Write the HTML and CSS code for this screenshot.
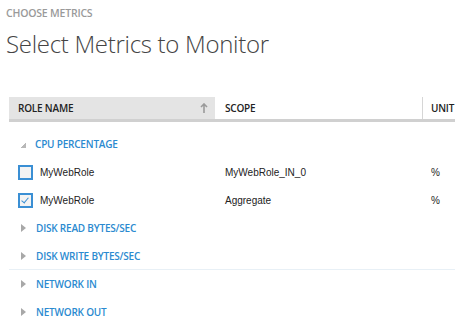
FILE: index.html
```html
<!DOCTYPE html>
<html lang="en">
<head>
    <meta charset="UTF-8">
    <title>Choose Metrics</title>
    <link rel="stylesheet" href="styles.css">
</head>
<body>
    <div class="page">
        <div class="crumb">CHOOSE METRICS</div>
        <h1>Select Metrics to Monitor</h1>

        <div class="grid">
            <div class="head">
                <div class="col role">ROLE NAME
                    <svg class="sort" width="8" height="10" viewBox="0 0 8 10">
                        <path d="M4 1 L4 10 M1 4 L4 1 L7 4" fill="none" stroke="#9a9a9a" stroke-width="1.6"/>
                    </svg>
                </div>
                <div class="col scope">SCOPE</div>
                <div class="col unit">UNIT</div>
            </div>

            <div class="group open"><span class="arrow down"></span>CPU PERCENTAGE</div>
            <div class="row">
                <div class="col role"><span class="check"></span>MyWebRole</div>
                <div class="col scope">MyWebRole_IN_0</div>
                <div class="col unit">%</div>
            </div>
            <div class="row">
                <div class="col role"><span class="check on"></span>MyWebRole</div>
                <div class="col scope">Aggregate</div>
                <div class="col unit">%</div>
            </div>

            <div class="group"><span class="arrow"></span>DISK READ BYTES/SEC</div>
            <div class="group line"><span class="arrow"></span>DISK WRITE BYTES/SEC</div>
            <div class="group"><span class="arrow"></span>NETWORK IN</div>
            <div class="group"><span class="arrow"></span>NETWORK OUT</div>
        </div>
    </div>
</body>
</html>
```

FILE: styles.css
```css
/* Base */
body {
    margin: 0;
    background: #ffffff;
    font-family: "Open Sans", "Segoe UI", sans-serif;
    color: #333333;
    overflow: hidden;
}

.page {
    padding: 6px 0 0 6px;
}

.crumb {
    font-size: 10.5px;
    font-weight: 600;
    color: #9a9a9a;
    letter-spacing: -0.2px;
    line-height: 14px;
}

h1 {
    margin: 9px 0 0 0;
    font-size: 24px;
    font-weight: 300;
    color: #444444;
    line-height: 30px;
    letter-spacing: -0.3px;
}

/* Grid */
.grid {
    margin: 38px 0 0 3px;
    width: 460px;
}

.head {
    display: flex;
    height: 22px;
    border-bottom: 3px solid #d0d0d0;
    font-size: 10px;
    font-weight: 600;
    color: #222222;
    letter-spacing: -0.2px;
}

.head .col {
    display: flex;
    align-items: center;
}

.col.role {
    width: 206px;
    padding-left: 9px;
    box-sizing: border-box;
}

.col.scope {
    width: 208px;
    padding-left: 10px;
    box-sizing: border-box;
}

.col.unit {
    padding-left: 8px;
}

.head .role {
    background: #e4e4e4;
    position: relative;
}

.head .scope {
    border-right: 1px solid #d6d6d6;
}

.sort {
    position: absolute;
    right: 7px;
    top: 6px;
}

.group {
    display: flex;
    align-items: center;
    height: 28px;
    padding-left: 11px;
    font-size: 10px;
    font-weight: 600;
    color: #2b8ad0;
    letter-spacing: -0.2px;
}

.group.open {
    margin-top: 8px;
}

.group.line {
    border-bottom: 1px solid #e8f0f6;
    height: 27px;
}

.arrow {
    width: 0;
    height: 0;
    border-top: 4px solid transparent;
    border-bottom: 4px solid transparent;
    border-left: 5px solid #a8a8a8;
    margin: 0 10px 0 1px;
}

.arrow.down {
    border: none;
    width: 6px;
    height: 6px;
    background: linear-gradient(135deg, transparent 50%, #b8b8b8 50%);
    margin: 2px 9px 0 0;
}

.row {
    display: flex;
    height: 28px;
    align-items: center;
    font-family: "Liberation Sans", Arial, sans-serif;
    font-size: 10px;
    color: #222222;
}

.row .col {
    display: flex;
    align-items: center;
}

.row .role {
    padding-left: 9px;
}

.check {
    width: 11px;
    height: 11px;
    border: 2px solid #3a8fd4;
    background: #f3f3f3;
    margin-right: 7px;
    position: relative;
}

.check.on::after {
    content: "";
    position: absolute;
    left: 3px;
    top: 1px;
    width: 3px;
    height: 6px;
    border-right: 1.5px solid #3a8fd4;
    border-bottom: 1.5px solid #3a8fd4;
    transform: rotate(40deg);
}
```
